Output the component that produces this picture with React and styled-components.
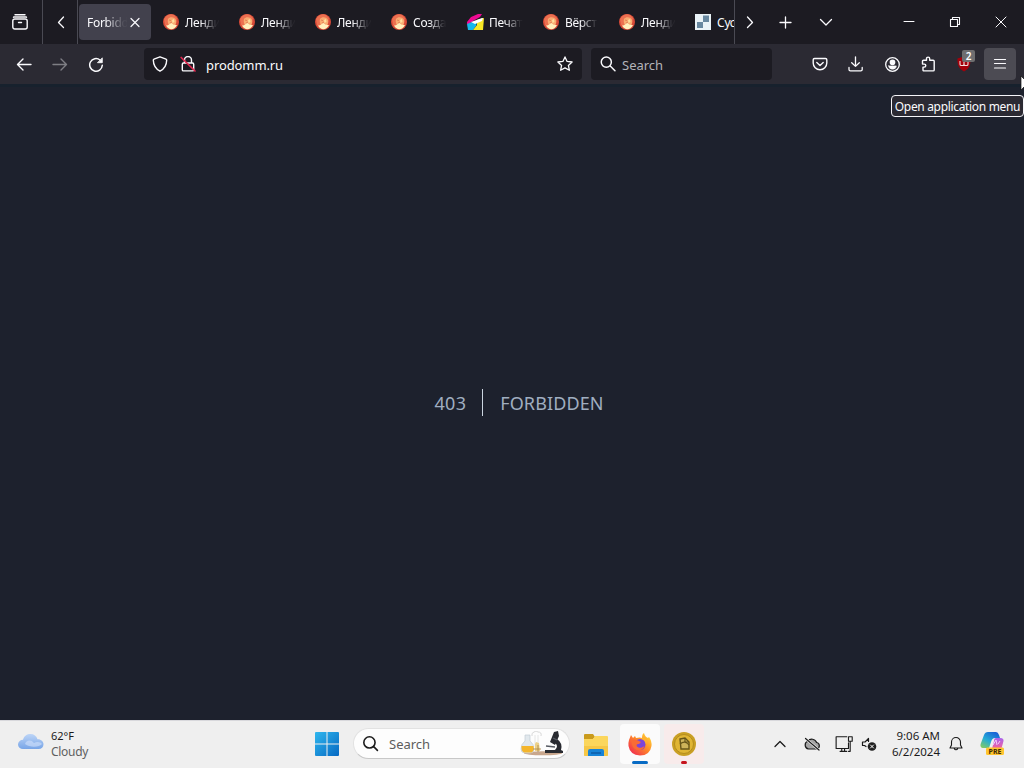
import React from "react"
import styled, { createGlobalStyle, css } from "styled-components"

const GlobalStyle = createGlobalStyle`
  * {
    box-sizing: border-box;
  }
  body {
    margin: 0;
    overflow: hidden;
    font-family: "Noto Sans", "Open Sans", sans-serif;
  }
  svg {
    flex: none;
  }
`

const Screen = styled.div`
  position: relative;
  display: flex;
  flex-direction: column;
  width: 1024px;
  height: 768px;
  overflow: hidden;
  background: #1d212d;
`

/* tab strip */

const TabStrip = styled.div`
  display: flex;
  flex: none;
  height: 44px;
  background: #1c1b22;
  color: #fbfbfe;
`

const StripCell = styled.div`
  display: flex;
  flex: none;
  align-items: center;
  justify-content: center;
  width: ${p => p.$w}px;
  padding-right: ${p => p.$pr || 0}px;
  padding-left: ${p => p.$pl || 0}px;
  ${p => p.$line && css`border-right: 1px solid #4a4a53;`}
`

const Tabs = styled.div`
  display: flex;
  flex: none;
  align-items: center;
  gap: 4px;
  width: 657px;
  padding-left: 1px;
  overflow: hidden;
  border-right: 1px solid #4a4a53;
`

const Tab = styled.div`
  display: flex;
  flex: none;
  align-items: center;
  width: ${p => (p.$cut ? 47 : 72)}px;
  height: 36px;
  padding: 0 ${p => (p.$cut ? 0 : 8)}px 0 8px;
  border-radius: 4px;
  background: ${p => (p.$active ? "#42414d" : "transparent")};
`

const TabLabel = styled.span`
  flex: none;
  width: ${p => p.$w}px;
  margin-left: ${p => p.$gap}px;
  padding-top: 1px;
  overflow: hidden;
  white-space: nowrap;
  font-size: 12px;
  line-height: 18px;
  letter-spacing: -0.3px;
  ${p => !p.$solid && css`
    mask-image: linear-gradient(to right, #000 45%, rgba(0, 0, 0, 0.05) 92%);
  `}
`

const Spacer = styled.div`
  flex: 1;
`

/* toolbar */

const Toolbar = styled.div`
  display: flex;
  flex: none;
  align-items: center;
  height: 40px;
  padding: 0 8px;
  background: #2b2a33;
  color: #fbfbfe;
`

const ToolButton = styled.div`
  position: relative;
  display: flex;
  flex: none;
  align-items: center;
  justify-content: center;
  width: 32px;
  height: 32px;
  margin-right: ${p => p.$gap ?? 4}px;
  border-radius: 4px;
  background: ${p => (p.$hover ? "#4c4b53" : "transparent")};

  svg {
    opacity: ${p => (p.$disabled ? 0.4 : 1)};
  }
`

const Field = styled.div`
  display: flex;
  flex: none;
  align-items: center;
  width: ${p => p.$w}px;
  height: 32px;
  padding: 0 9px 0 8px;
  margin-left: ${p => p.$ml}px;
  border-radius: 4px;
  background: #1c1b22;
`

const Address = styled.span`
  flex: 1;
  margin-left: 10px;
  padding-top: 2px;
  font-size: 13px;
  line-height: 20px;
  letter-spacing: -0.1px;
`

const Placeholder = styled.span`
  margin-left: 5px;
  padding-top: 2px;
  color: #b3b3b9;
  font-size: 13px;
  line-height: 20px;
`

const ShieldWrap = styled.div`
  display: flex;
  width: 28px;
`

const Badge = styled.div`
  position: absolute;
  top: 2px;
  right: 5px;
  width: 13px;
  height: 12px;
  border-radius: 2px;
  background: #6e6e70;
  color: #fff;
  font-size: 10px;
  font-weight: 600;
  line-height: 12px;
  text-align: center;
`

const Tooltip = styled.div`
  position: absolute;
  top: 95px;
  right: 0;
  width: 133px;
  height: 22px;
  border: 1px solid #f4f4f8;
  border-radius: 4px;
  background: #2b2a33;
  color: #fbfbfe;
  font-size: 12px;
  line-height: 21px;
  text-align: center;
  white-space: nowrap;
  letter-spacing: -0.33px;
`

const Cursor = styled.svg`
  position: absolute;
  top: 75px;
  left: 1020px;
`

/* page */

const Page = styled.main`
  display: flex;
  flex: 1;
  justify-content: center;
  padding: 302px 0 0 14px;
  border-top: 3px solid #17212d;
  color: #a0aec0;
  font-size: 18px;
  line-height: 29px;
`

const Code = styled.div`
  height: 27px;
  padding-right: 16px;
  border-right: 1px solid #cbd5e0;
  letter-spacing: 0.3px;
`

const Message = styled.div`
  margin-left: 17px;
  letter-spacing: 0.1px;
`

/* taskbar */

const Taskbar = styled.footer`
  display: flex;
  flex: none;
  align-items: center;
  height: 48px;
  padding-bottom: 2px;
  border-top: 1px solid #d8d8dc;
  background: #efefef;
  color: #1b1b1b;
`

const Weather = styled.div`
  display: flex;
  align-items: center;
  width: 315px;
  padding-left: 18px;
  font-size: 11px;
  line-height: 16px;

  svg {
    margin-bottom: 4px;
  }
`

const WeatherText = styled.div`
  margin-left: 7px;

  span {
    display: block;
    color: #5f5f5f;
    font-size: 12px;
    letter-spacing: -0.3px;
  }
`

const TaskSearch = styled.div`
  display: flex;
  flex: none;
  align-items: center;
  width: 217px;
  height: 31px;
  margin: 0 6px 0 14px;
  padding: 0 5px 0 8px;
  border: 1px solid #e2e2e2;
  border-bottom-color: #c8c8c8;
  border-radius: 16px;
  background: #fdfdfd;
  color: #1b1b1b;
  font-size: 13px;

  span {
    flex: 1;
    margin-left: 10px;
    color: #5c5c5c;
  }
`

const TaskApp = styled.div`
  display: flex;
  flex: none;
  flex-direction: column;
  align-items: center;
  justify-content: flex-end;
  width: 40px;
  height: 40px;
  margin-right: 4px;
  border-radius: 4px;
  background: ${p => p.$bg || "transparent"};

  &::after {
    content: "";
    width: ${p => p.$mark || 0}px;
    height: 3px;
    margin-top: 5px;
    border-radius: 2px;
    background: ${p => p.$markColor || "transparent"};
  }
`

const Tray = styled.div`
  display: flex;
  align-items: center;
  gap: ${p => p.$gap}px;
  margin-right: ${p => p.$mr}px;
`

const Clock = styled.div`
  width: 60px;
  margin-right: 8px;
  font-size: 11.5px;
  line-height: 16px;
  text-align: right;
  white-space: nowrap;
`

/* icons */

const Icon = ({ size = 16, sw = 1.3, children }) => (
  <svg width={size} height={size} viewBox="0 0 16 16" fill="none" stroke="currentColor"
    strokeWidth={sw} strokeLinecap="round" strokeLinejoin="round">
    {children}
  </svg>
)

const FlameIcon = () => (
  <svg width="16" height="16" viewBox="0 0 16 16">
    <circle cx="8" cy="8" r="8" fill="#d94a38" />
    <path d="M1 5C3 1 8-1 11 1l3 3-2 9-5 2-5-4z" fill="#ec7050" />
    <path d="M5 5C7 2 12 3 13 6c1 3-1 6-3 7-4 0-6-4-5-8z" fill="#f9ac72" />
    <path d="M3 11.500c2 .5 3-1 5-2.500 2 1 2 2 6 2-2 5-8 6-11 .5z" fill="#fff0bd" />
    <path d="M6 6l2 .6M7 9l2-1" stroke="#dd7650" strokeWidth=".8" />
    <path d="M9 6l2-1 .5 3-2 1z" fill="#ffdf9d" />
  </svg>
)

const PrintIcon = () => (
  <svg width="18" height="16" viewBox="0 0 18 16">
    <path d="M0 8L4 3l7-3h4l-2 3-7 4-4 3H0z" fill="#ed0a91" />
    <path d="M0 10l5-2h5l-1 4-3 4H1z" fill="#16b8ea" />
    <path d="M10 6l7-2-1 12H6l4-5z" fill="#f8e925" />
    <path d="M4 8l11-4h1l-1 3-7 3z" fill="#fff" />
  </svg>
)

const CheckerIcon = () => (
  <svg width="16" height="16" viewBox="0 0 16 16">
    <path fill="#eaf3f7" d="M0 0h16v16H0z" />
    <path fill="#6888a0" d="M8 1.500h6V8H8zM2 8h6v6H2z" />
  </svg>
)

const WindowsLogo = () => (
  <svg width="24" height="24" viewBox="0 0 24 24">
    <defs>
      <linearGradient id="win" x2="1" y2="1">
        <stop stopColor="#2fb7ee" />
        <stop offset="1" stopColor="#0668c2" />
      </linearGradient>
    </defs>
    <path fill="url(#win)" d="M1 0h10.500v11.500H0V1a1 1 0 0 1 1-1zM12.500 0H23a1 1 0 0 1 1 1v10.500H12.500zM0 12.500h11.500V24H1a1 1 0 0 1-1-1zM12.500 12.500H24V23a1 1 0 0 1-1 1H12.500z" />
  </svg>
)

const CloudIcon = () => (
  <svg width="26" height="18" viewBox="0 0 26 18">
    <defs>
      <linearGradient id="cloud" x2="0" y2="1">
        <stop stopColor="#bdd5f7" />
        <stop offset="1" stopColor="#78a5e7" />
      </linearGradient>
    </defs>
    <path fill="url(#cloud)" d="M5 16a5 4.600 0 0 1 0-9.200C6 3 9 1 12.500 1s6 2 7 5.200C23 6 25.500 8.500 25.500 11.300c0 3-2 4.700-5 4.700z" />
    <path fill="#c9dcfa" d="M7 11c1-4 6-5 9-1 3-2 7-1 8 1-2 3-12 4-17 0z" opacity=".7" />
  </svg>
)

const LabArt = () => (
  <svg width="44" height="26" viewBox="0 0 44 26">
    <ellipse cx="23" cy="22.300" rx="19" ry="2" fill="#c9a78d" />
    <path d="M5 4h5v6q4 3 4 8 0 4-4 4H5q-4 0-4-4 0-5 4-8z" fill="#e1e8ed" stroke="#c1ccd4" strokeWidth=".7" />
    <path d="M1.500 15h12q1 5-2 6.500H4Q1 20 1.500 15z" fill="#f4b52c" />
    <path d="M12 5q-1-3 2-4 2-2 4 0 4 0 3 4" fill="none" stroke="#d8d8d8" />
    <path d="M15 4v12M18 4v12" stroke="#dedfe0" strokeWidth=".8" />
    <path d="M15 13l1-2 3 1 1 8h-5z" fill="#ecd18b" />
    <path d="M18 14v7M13 18h8" stroke="#a88545" strokeWidth=".8" />
    <path d="M34 1l4-1 1 5-4 9-5-3zM37 8q6 4 4 11l2 1v2H25v-3h10q4-4 0-7z" fill="#292b31" />
    <path d="M26 15l9 1M33 7l4 2" stroke="#565a62" strokeWidth="1.300" />
  </svg>
)

const FolderIcon = () => (
  <svg width="24" height="22" viewBox="0 0 24 22">
    <path d="M0 1q0-1 1-1h8l2 3-2 2H0z" fill="#c99a1c" />
    <path d="M0 5h9l2-3h12q1 0 1 1v18q0 1-1 1H1q-1 0-1-1z" fill="#fbd65c" />
    <path d="M0 12h24v9q0 1-1 1H1q-1 0-1-1z" fill="#f6c746" />
    <path d="M4 22v-5q0-2 2-2h12q2 0 2 2v5z" fill="#1683d7" />
    <path d="M7 19h10" stroke="#0d5ba7" strokeWidth="1.500" />
  </svg>
)

const FirefoxLogo = () => (
  <svg width="24" height="24" viewBox="0 0 24 24">
    <defs>
      <linearGradient id="fox" x1="1" x2="0" y2="1">
        <stop stopColor="#ffe83c" />
        <stop offset=".45" stopColor="#ff8a28" />
        <stop offset="1" stopColor="#ed1859" />
      </linearGradient>
    </defs>
    <path fill="url(#fox)" d="M1 8l2-5 2 3 2-2 1 2q4-1 6 0 0-4 2-5 1 4 4 5l1-1q3 4 2.500 9Q22 23.500 12 23.500 2 23 .5 14 .3 10 1 8z" />
    <circle cx="12" cy="12.500" r="5.500" fill="#7c45d8" />
    <path d="M4 8c2-1 4-.5 6 .5l3 1.500-2 2c-2-.5-3 1-2 2.500 2 2 5 1.500 7.500-.5-1 5-8 6-11.500 1-1.500-2-1.500-5-1-7z" fill="#f96b35" />
    <path d="M12 7c4 0 5 2 6 5 1-2 1-4 0-5.500-2-1.500-4-1-6 .5z" fill="#ffb32f" />
  </svg>
)

const CoinIcon = () => (
  <svg width="24" height="24" viewBox="0 0 24 24">
    <circle cx="12" cy="12" r="12" fill="#c99f24" />
    <circle cx="12" cy="12" r="9.500" fill="#e0b534" stroke="#b58d1d" />
    <path d="M8 7l5-1 4 4v7H9z" fill="#cdb35a" stroke="#665519" strokeWidth="1.400" />
    <path d="M8 12q5-4 9 1M13 6v4h4" fill="none" stroke="#665519" strokeWidth="1.200" />
  </svg>
)

const CopilotIcon = () => (
  <svg width="25" height="25" viewBox="0 0 25 25">
    <defs>
      <linearGradient id="cop1" x1=".7" x2="0" y2="1">
        <stop stopColor="#1863d6" />
        <stop offset=".5" stopColor="#25acd5" />
        <stop offset="1" stopColor="#8fce54" />
      </linearGradient>
      <linearGradient id="cop2" x2="0" y2="1">
        <stop stopColor="#a763ed" />
        <stop offset=".6" stopColor="#ed62a4" />
        <stop offset="1" stopColor="#f99b57" />
      </linearGradient>
    </defs>
    <path d="M8 1h8q2 0 3 3l1 3h-5q-3 0-4 4l-2 6H4q-5 0-3-5l3-8q1-3 4-3z" fill="url(#cop1)" />
    <path d="M16 7h4q5 0 3 5l-2 7q-1 4-5 4H8q3-1 4-5l2-8q0-3 2-3z" fill="url(#cop2)" />
    <path d="M13 14l3-5 1 5M18 13l2-3" stroke="#f4c9fa" fill="none" />
    <rect x="6" y="16.500" width="18" height="7.500" rx="1.500" fill="#ffc52e" />
    <text x="15" y="22.800" textAnchor="middle" fontFamily="Noto Sans" fontSize="7" fontWeight="700" fill="#3a2905">PRE</text>
  </svg>
)

const tabs = [
  { icon: <FlameIcon />, title: "Ленди" },
  { icon: <FlameIcon />, title: "Ленди" },
  { icon: <FlameIcon />, title: "Ленди" },
  { icon: <FlameIcon />, title: "Созда" },
  { icon: <PrintIcon />, title: "Печат", gap: 4 },
  { icon: <FlameIcon />, title: "Вёрст" },
  { icon: <FlameIcon />, title: "Ленди" },
  { icon: <CheckerIcon />, title: "Сус", cut: true },
]

const App = () => {
  return (
    <Screen>
      <GlobalStyle />
      <TabStrip>
        <StripCell $w={43} $pr={2} $line>
          <Icon sw={1.4}>
            <path d="M3 .8h10M1.500 3.300q0-.3.500-.3h12q.5 0 .5.300" />
            <rect x=".8" y="5" width="14.400" height="10" rx="2" />
            <path d="M6.500 8.500h3" />
          </Icon>
        </StripCell>
        <StripCell $w={35} $pl={2} $line>
          <Icon><path d="M10.500 3L5.500 8.500l5 5" /></Icon>
        </StripCell>
        <Tabs>
          <Tab $active>
            <TabLabel $w={40} $gap={0}>Forbidd</TabLabel>
            <Icon sw={1.2}><path d="M4 4.500l8 8M12 4.500l-8 8" /></Icon>
          </Tab>
          {tabs.map((tab, i) => (
            <Tab key={i} $cut={tab.cut}>
              {tab.icon}
              <TabLabel $w={tab.cut ? 22 : 34} $gap={tab.gap || 6} $solid={tab.cut}>{tab.title}</TabLabel>
            </Tab>
          ))}
        </Tabs>
        <StripCell $w={30}>
          <Icon><path d="M5.500 3l5 5.500-5 5" /></Icon>
        </StripCell>
        <StripCell $w={40}>
          <Icon><path d="M8.500 3v11M3 8.500h11" /></Icon>
        </StripCell>
        <StripCell $w={42}>
          <Icon><path d="M2.500 5.500L8 11l5.500-5.500" /></Icon>
        </StripCell>
        <Spacer />
        <StripCell $w={46}>
          <Icon sw={1}><path d="M3 7.500h10" /></Icon>
        </StripCell>
        <StripCell $w={46}>
          <Icon sw={1.1}><path d="M3.500 5.500h7v7h-7zM5.500 5V3.500h7v7H11" /></Icon>
        </StripCell>
        <StripCell $w={46}>
          <Icon sw={1}><path d="M3 3l10 10M13 3L3 13" /></Icon>
        </StripCell>
      </TabStrip>

      <Toolbar>
        <ToolButton>
          <Icon sw={1.4}><path d="M15 8.500H1.500M7 3L1.500 8.500 7 14" /></Icon>
        </ToolButton>
        <ToolButton $disabled>
          <Icon sw={1.4}><path d="M1 8.500h13.500M9 3l5.500 5.500L9 14" /></Icon>
        </ToolButton>
        <ToolButton>
          <Icon sw={1.5}>
            <path d="M14.300 9.300A6.300 6.300 0 1 1 12 4" />
            <path d="M14.300 2.200v4.500H9.800z" fill="currentColor" strokeWidth=".8" />
          </Icon>
        </ToolButton>
        <Field $w={438} $ml={28}>
          <ShieldWrap>
            <Icon sw={1.4}><path d="M8 .8l6 2.300c.5.200.7.500.7 1C14.600 9 12.500 13 8 15.200 3.500 13 1.400 9 1.300 4.100c0-.5.2-.8.7-1z" /></Icon>
          </ShieldWrap>
          <Icon sw={1.4}>
            <path d="M4.500 7V4a3.500 3.500 0 0 1 7 0v3M3.500 7h9q1.200 0 1.200 1.200v5.500q0 1.200-1.200 1.200h-9q-1.200 0-1.200-1.200V8.200Q2.300 7 3.500 7z" />
            <path d="M1.200 1.500L15 15" stroke="#e22850" strokeWidth="1.700" />
          </Icon>
          <Address>prodomm.ru</Address>
          <Icon><path d="M8 .9l2.100 4.500 5 .6-3.700 3.400 1 4.900L8 11.900l-4.400 2.400 1-4.900L.9 6l5-.6z" /></Icon>
        </Field>
        <Field $w={181} $ml={9}>
          <Icon size={18} sw={1.3}><circle cx="6.500" cy="6.300" r="4.500" /><path d="M10 9.800l4.200 4.200" /></Icon>
          <Placeholder>Search</Placeholder>
        </Field>
        <Spacer />
        <ToolButton>
          <Icon sw={1.4}>
            <path d="M2.500 2.500h11q1.300 0 1.300 1.300V7a6.800 6.800 0 0 1-13.600 0V3.800q0-1.300 1.300-1.300z" />
            <path d="M4.800 6.500L8 9.500l3.200-3" />
          </Icon>
        </ToolButton>
        <ToolButton>
          <Icon sw={1.3}><path d="M7.500 .8v9.500M3.700 6.700l3.800 3.700 3.800-3.700M1 11.500v2q0 1.400 1.400 1.400h10.400q1.400 0 1.400-1.400v-2" /></Icon>
        </ToolButton>
        <ToolButton>
          <Icon sw={1.3}>
            <circle cx="8.500" cy="8.500" r="6.800" />
            <circle cx="8.500" cy="6.300" r="2.200" fill="currentColor" />
            <path d="M4.700 9.900h7.600c0 2-1.500 3.300-3.800 3.300s-3.800-1.300-3.800-3.300z" fill="currentColor" strokeWidth=".6" />
          </Icon>
        </ToolButton>
        <ToolButton>
          <Icon sw={1.4}><path d="M6.500 4.200V2.700a1.600 1.600 0 0 1 3.200 0v1.500h3.500q1 0 1 1v8.700q0 1-1 1H4q-1 0-1-1v-2.800h1.300a1.500 1.500 0 0 0 0-3H2.500V5.200q0-1 1-1z" /></Icon>
        </ToolButton>
        <ToolButton>
          <svg width="16" height="16" viewBox="0 0 16 16">
            <path d="M8 .5l6.500 2c.2 6-1 10-6.500 13-5.500-3-6.700-7-6.500-13z" fill="#a5000b" />
            <path d="M4 5v3.200q0 1.300 1.300 1.300h1.400Q8 9.500 8 8.200V6v2.200q0 1.300 1.300 1.300h1.400q1.300 0 1.300-1.300V5" fill="none" stroke="#f1dddd" strokeWidth="1.100" />
          </svg>
          <Badge>2</Badge>
        </ToolButton>
        <ToolButton $hover $gap={0}>
          <Icon sw={1.2}><path d="M2.500 3.500h11M2.500 7.500h11M2.500 12h11" /></Icon>
        </ToolButton>
      </Toolbar>

      <Page>
        <Code>403</Code>
        <Message>FORBIDDEN</Message>
      </Page>

      <Taskbar>
        <Weather>
          <CloudIcon />
          <WeatherText>
            62°F
            <span>Cloudy</span>
          </WeatherText>
        </Weather>
        <WindowsLogo />
        <TaskSearch>
          <Icon size={17} sw={1.5}><circle cx="7" cy="7" r="5.300" /><path d="M11 11l3.500 3.500" /></Icon>
          <span>Search</span>
          <LabArt />
        </TaskSearch>
        <TaskApp>
          <FolderIcon />
        </TaskApp>
        <TaskApp $bg="#fbfbfb" $mark={16} $markColor="#086bc4">
          <FirefoxLogo />
        </TaskApp>
        <TaskApp $bg="#f8ebeb" $mark={6} $markColor="#c5141d">
          <CoinIcon />
        </TaskApp>
        <Spacer />
        <Tray $gap={16} $mr={15}>
          <Icon><path d="M3 10.500l5-5 5 5" /></Icon>
          <Icon sw={1.2}>
            <path d="M4.500 13a4 4 0 0 1-.7-7.700 5 5 0 0 1 8.800 1.200 3.300 3.300 0 0 1 0 6.500z" fill="#a5a5a5" />
            <path d="M1.500 2.500L15 14" stroke="#efefef" strokeWidth="2.300" />
            <path d="M1.500 2.500L15 14" />
          </Icon>
        </Tray>
        <Tray $gap={8} $mr={3}>
          <Icon size={18} sw={1}>
            <path d="M10.500 1.500H1v10.500h11V7M4.500 14.500h6M6 12v2.500M8.500 12v2.500" />
            <path d="M12 1.500h3.300v4H12zM13.500 5.500v9H12" />
          </Icon>
          <Icon sw={1.2}>
            <path d="M5 10.500L3.500 9.500H1.500V6H4L7.500 2.500v3" />
            <circle cx="11" cy="10.500" r="4.300" fill="#202020" stroke="none" />
            <path d="M9.500 9l3 3M12.500 9l-3 3" stroke="#fff" strokeWidth="1" />
          </Icon>
        </Tray>
        <Clock>
          9:06 AM<br />6/2/2024
        </Clock>
        <Tray $gap={16} $mr={19}>
          <Icon sw={1.1}><path d="M2 12h12l-1.500-3V6a4.500 4.500 0 0 0-9 0v3zM6.300 12.500a1.800 1.800 0 0 0 3.400 0" /></Icon>
          <CopilotIcon />
        </Tray>
      </Taskbar>

      <Tooltip>Open application menu</Tooltip>
      <Cursor width="12" height="18" viewBox="0 0 12 18">
        <path d="M1 1v14l3-3 3 5 2-1-3-5h5z" fill="#fff" stroke="#111" strokeWidth=".7" />
      </Cursor>
    </Screen>
  )
}

export default App
